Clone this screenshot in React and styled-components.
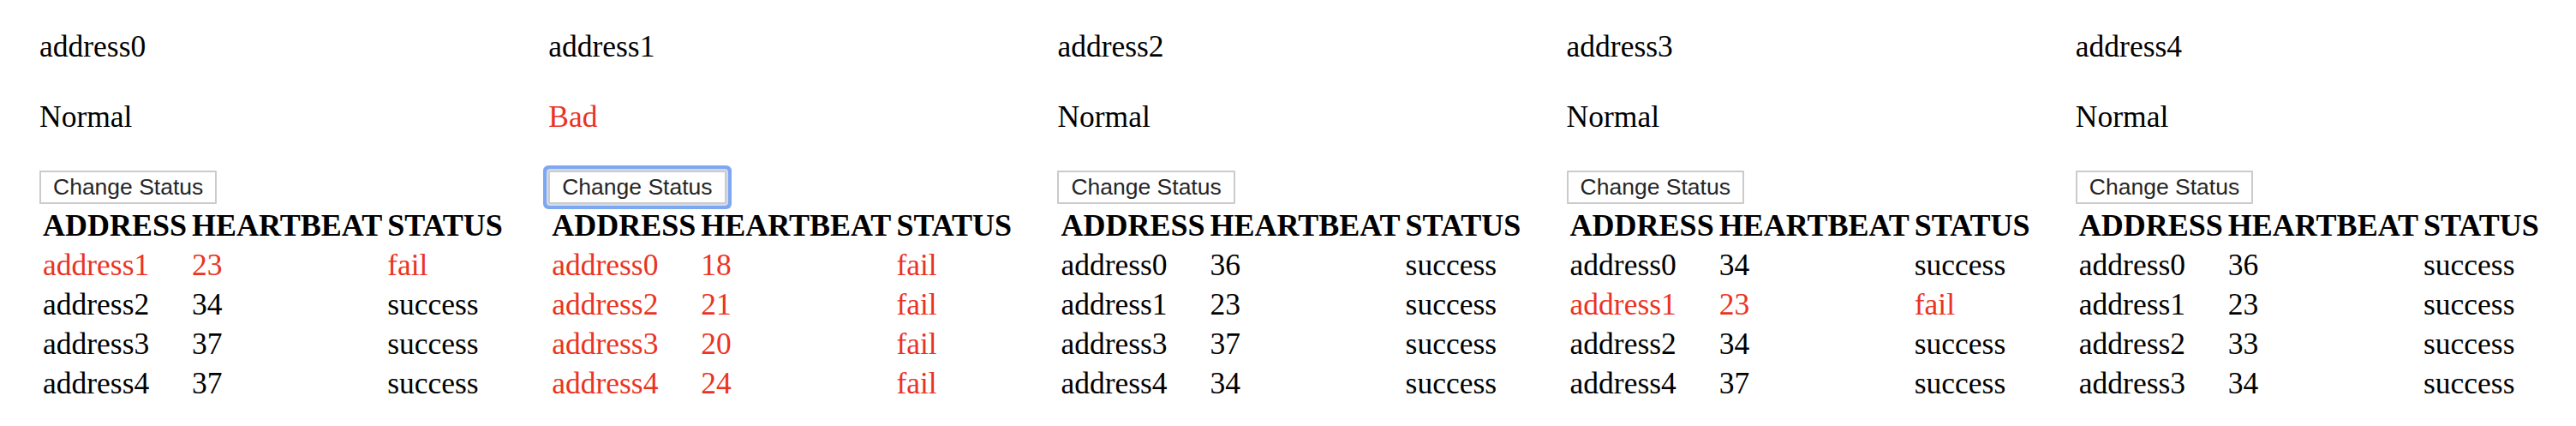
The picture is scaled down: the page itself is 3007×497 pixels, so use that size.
import React from "react";
import styled, { createGlobalStyle, css } from "styled-components";

const GlobalStyle = createGlobalStyle`
  body {
    margin: 0;
    background: #fff;
    color: #000;
    font-family: "Liberation Serif", "Times New Roman", serif;
  }
`;

const Board = styled.div`
  display: flex;
  padding: 0 18px;
`;

const Node = styled.div`
  flex: 1;
  min-width: 0;
  display: flex;
  flex-direction: column;
  align-items: flex-start;
  padding: 34px 0 0 28px;
  font-size: 35.5px;
  line-height: 40px;
`;

const NodeName = styled.div`
  margin-bottom: 42px;
`;

const NodeStatus = styled.div`
  color: ${(p) => (p.$bad ? "#eb3323" : "#000")};
  margin-bottom: 43px;
`;

const ChangeButton = styled.button`
  box-sizing: border-box;
  height: 39px;
  padding: 0 14px;
  background: #fff;
  border: 2px solid #cbcbcb;
  border-radius: 1px;
  color: #262626;
  font-family: "Liberation Sans", Arial, sans-serif;
  font-size: 26.5px;
  line-height: 35px;
  cursor: pointer;
  ${(p) =>
    p.$focused &&
    css`
      box-shadow: 0 0 0 2px #d3dbea, 0 0 0 6px #7ea7f1;
      border-radius: 2px;
    `}
`;

const Table = styled.table`
  border-collapse: separate;
  border-spacing: 2px 4px;
  font-family: "Liberation Serif", "Times New Roman", serif;
  font-size: 35.5px;
  line-height: 38px;
`;

const Th = styled.th`
  padding: 2px;
  font-size: 36px;
  font-weight: 700;
  text-align: center;
`;

const Td = styled.td`
  padding: 2px;
  text-align: left;
  color: ${(p) => (p.$fail ? "#eb3323" : "#000")};
`;

const nodes = [
  {
    name: "address0",
    bad: false,
    rows: [
      ["address1", 23, false],
      ["address2", 34, true],
      ["address3", 37, true],
      ["address4", 37, true],
    ],
  },
  {
    name: "address1",
    bad: true,
    focused: true,
    rows: [
      ["address0", 18, false],
      ["address2", 21, false],
      ["address3", 20, false],
      ["address4", 24, false],
    ],
  },
  {
    name: "address2",
    bad: false,
    rows: [
      ["address0", 36, true],
      ["address1", 23, true],
      ["address3", 37, true],
      ["address4", 34, true],
    ],
  },
  {
    name: "address3",
    bad: false,
    rows: [
      ["address0", 34, true],
      ["address1", 23, false],
      ["address2", 34, true],
      ["address4", 37, true],
    ],
  },
  {
    name: "address4",
    bad: false,
    rows: [
      ["address0", 36, true],
      ["address1", 23, true],
      ["address2", 33, true],
      ["address3", 34, true],
    ],
  },
];

export default function App() {
  return (
    <>
      <GlobalStyle />
      <Board>
        {nodes.map((node) => (
          <Node key={node.name}>
            <NodeName>{node.name}</NodeName>
            <NodeStatus $bad={node.bad}>{node.bad ? "Bad" : "Normal"}</NodeStatus>
            <ChangeButton $focused={node.focused}>Change Status</ChangeButton>
            <Table>
              <thead>
                <tr>
                  <Th>ADDRESS</Th>
                  <Th>HEARTBEAT</Th>
                  <Th>STATUS</Th>
                </tr>
              </thead>
              <tbody>
                {node.rows.map(([addr, beat, ok]) => (
                  <tr key={addr}>
                    <Td $fail={!ok}>{addr}</Td>
                    <Td $fail={!ok}>{beat}</Td>
                    <Td $fail={!ok}>{ok ? "success" : "fail"}</Td>
                  </tr>
                ))}
              </tbody>
            </Table>
          </Node>
        ))}
      </Board>
    </>
  );
}
